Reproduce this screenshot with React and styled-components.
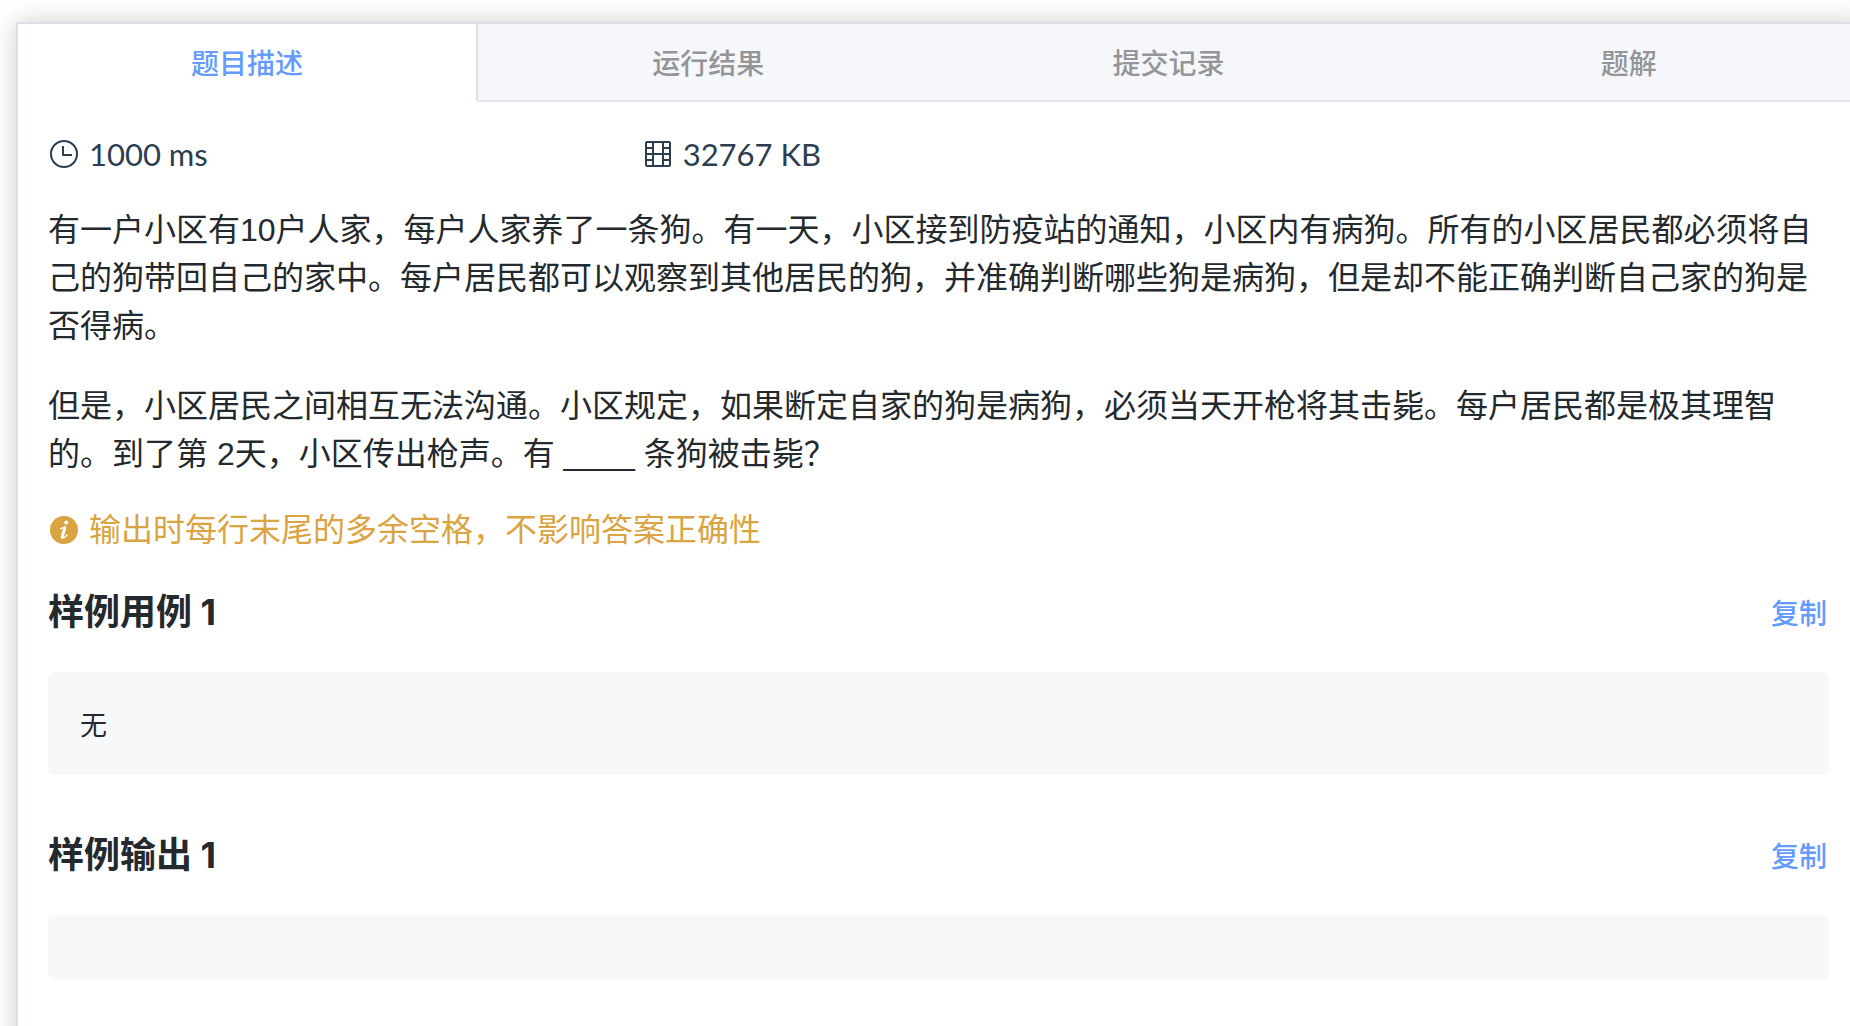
import React, { useState } from "react";
import styled, { createGlobalStyle } from "styled-components";

const GlobalStyle = createGlobalStyle`
  * { box-sizing: border-box; }
  html { overflow-x: hidden; }
  body {
    margin: 0;
    background: #fff;
    color: #24292e;
    font-family: "Liberation Sans", "Noto Sans CJK SC", sans-serif;
    font-size: 32px;
    line-height: 48px;
  }
`;

const Page = styled.div`
  display: flex;
  min-height: 100vh;
  padding: 22px 0 0 16px;
  overflow: hidden;
`;

const Card = styled.main`
  flex: 1;
  min-width: 0;
  margin-right: -11px;
  border: 2px solid #dcdfe6;
  border-bottom: 0;
  background: #fff;
  box-shadow: 0 0 25px #d0cdcd;
`;

const TabBar = styled.div`
  display: grid;
  grid-template-columns: repeat(4, 1fr);
  height: 78px;
  background: #f5f7fa;
`;

const Tab = styled.button`
  padding: 0;
  border: 0;
  border-right: ${(p) => (p.$active ? "2px solid #dcdfe6" : "0")};
  border-bottom: 2px solid ${(p) => (p.$active ? "#fff" : "#e4e7ed")};
  background: ${(p) => (p.$active ? "#fff" : "#f5f7fb")};
  color: ${(p) => (p.$active ? "#659bff" : "#939598")};
  font: 500 28px/40px "Noto Sans CJK SC", sans-serif;
  cursor: pointer;
`;

const Body = styled.div`
  padding: 28px 30px;
`;

const Meta = styled.div`
  display: grid;
  grid-template-columns: repeat(3, 1fr);
  margin-bottom: 28px;
  color: #2c3e50;
  font-family: Lato, sans-serif;
  font-size: 31px;
`;

const IconText = styled.div`
  display: flex;
  align-items: center;
  gap: 9px;
  svg { flex: none; }
`;

const Description = styled.div`
  display: grid;
  gap: 32px;
`;

const Paragraph = styled.p`
  margin: 0;
`;

const Notice = styled(IconText)`
  margin: 28px 0 34px;
  color: #d9a441;
`;

const SampleHead = styled.div`
  display: flex;
  align-items: center;
  justify-content: space-between;
  margin-bottom: 36px;
`;

const SampleTitle = styled.h2`
  margin: 0;
  font: 700 36px/48px Inter, "Noto Sans CJK SC", sans-serif;
`;

const CopyButton = styled.button`
  padding: 0 2px;
  border: 0;
  background: none;
  color: #659bff;
  font: 500 28px/40px "Noto Sans CJK SC", sans-serif;
  cursor: pointer;
`;

const Code = styled.pre`
  min-height: 64px;
  margin: 0 0 56px;
  padding: 32px;
  border-radius: 6px;
  background: #f6f8fa;
  font: 27px/39px "Noto Sans CJK SC", sans-serif;
`;

const ClockIcon = () => (
  <svg width="32" height="32" viewBox="0 0 32 32" fill="none" stroke="currentColor" strokeWidth="2" aria-hidden="true">
    <circle cx="16" cy="16" r="13" />
    <path d="M15 8v9h9" strokeLinejoin="round" />
  </svg>
);

const FilmIcon = () => (
  <svg width="32" height="32" viewBox="0 0 32 32" fill="none" stroke="currentColor" strokeWidth="2" aria-hidden="true">
    <rect x="4" y="4" width="24" height="24" rx="1" />
    <path d="M11 4v24M21 4v24M4 10h7M4 16h24M4 22h7M21 10h7M21 22h7" />
  </svg>
);

const InfoIcon = () => (
  <svg width="32" height="32" viewBox="0 0 32 32" aria-hidden="true">
    <circle cx="16" cy="16" r="14" fill="currentColor" />
    <circle cx="18.2" cy="8.6" r="2" fill="#fff" />
    <path d="M12.6 14.6l4.6-1.600-2.800 10q.6 2.600 4.600-2" fill="none" stroke="#fff" strokeWidth="1.300" strokeLinecap="round" strokeLinejoin="round" />
    <path d="M16.700 13.800l-2.500 9.400" stroke="#fff" strokeWidth="3" strokeLinecap="round" />
  </svg>
);

const TABS = ["题目描述", "运行结果", "提交记录", "题解"];

const SAMPLES = [
  { title: "样例用例 1", text: "无" },
  { title: "样例输出 1", text: "" },
];

export default function App() {
  const [active, setActive] = useState(0);
  return (
    <>
      <GlobalStyle />
      <Page>
        <Card>
          <TabBar role="tablist">
            {TABS.map((name, i) => (
              <Tab key={name} role="tab" aria-selected={i === active} $active={i === active} onClick={() => setActive(i)}>
                {name}
              </Tab>
            ))}
          </TabBar>
          <Body>
            <Meta>
              <IconText><ClockIcon />1000 ms</IconText>
              <IconText><FilmIcon />32767 KB</IconText>
            </Meta>
            <Description>
              <Paragraph>
                有一户小区有10户人家，每户人家养了一条狗。有一天，小区接到防疫站的通知，小区内有病狗。所有的小区居民都必须将自己的狗带回自己的家中。每户居民都可以观察到其他居民的狗，并准确判断哪些狗是病狗，但是却不能正确判断自己家的狗是否得病。
              </Paragraph>
              <Paragraph>
                但是，小区居民之间相互无法沟通。小区规定，如果断定自家的狗是病狗，必须当天开枪将其击毙。每户居民都是极其理智的。到了第 2天，小区传出枪声。有 ____ 条狗被击毙？
              </Paragraph>
            </Description>
            <Notice><InfoIcon />输出时每行末尾的多余空格，不影响答案正确性</Notice>
            {SAMPLES.map(({ title, text }) => (
              <section key={title}>
                <SampleHead>
                  <SampleTitle>{title}</SampleTitle>
                  <CopyButton>复制</CopyButton>
                </SampleHead>
                <Code>{text}</Code>
              </section>
            ))}
          </Body>
        </Card>
      </Page>
    </>
  );
}
